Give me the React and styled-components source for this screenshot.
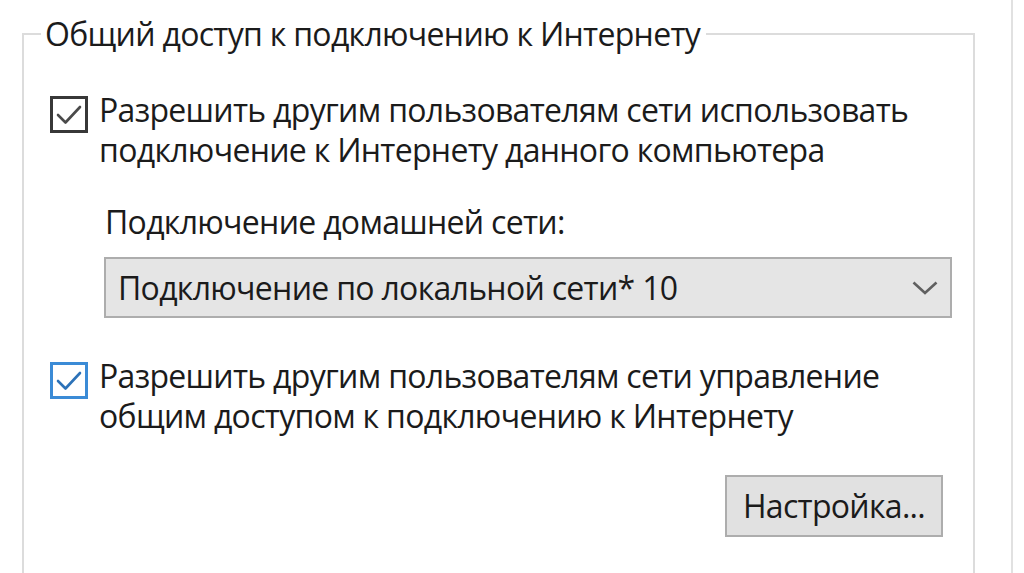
import React from "react";
import styled, { createGlobalStyle } from "styled-components";

const GlobalStyle = createGlobalStyle`
  html, body {
    margin: 0;
    padding: 0;
    background: #ffffff;
  }
  body {
    font-family: "Open Sans", "Noto Sans", sans-serif;
    color: #1b1b1b;
  }
`;

const Page = styled.div`
  width: 1024px;
  height: 573px;
  overflow: hidden;
  padding-left: 22px;
  box-sizing: border-box;
  display: flex;
`;

const Window = styled.div`
  width: 991px;
  height: 100%;
  border-right: 2px solid #e1e1e1;
  box-sizing: border-box;
`;

const Group = styled.fieldset`
  width: 953px;
  margin: 14px 0 0 0;
  padding: 0 0 60px 0;
  border: 2px solid #dcdcdc;
  box-sizing: border-box;
  min-height: 600px;
`;

// shared text metrics, squeezed a little to get Segoe-like widths
const text = `
  font-size: 32px;
  line-height: 40px;
  letter-spacing: -0.7px;
  white-space: nowrap;
`;

const Legend = styled.legend`
  ${text}
  margin-left: 17px;
  padding: 0 6px 0 4px;
`;

const CheckRow = styled.label`
  display: flex;
  align-items: flex-start;
  gap: 11px;
  margin: ${(p) => p.$top}px 0 0 26px;
`;

const Box = styled.span`
  flex: none;
  width: 38px;
  height: 37px;
  margin-top: 6px;
  box-sizing: border-box;
  border: 3px solid ${(p) => (p.$focused ? "#3b8bd6" : "#383838")};
  display: flex;
  align-items: center;
  justify-content: center;
  background: #ffffff;
`;

const CheckText = styled.span`
  ${text}
`;

const Label = styled.div`
  ${text}
  margin: 32px 0 0 81px;
`;

const Combo = styled.div`
  margin: 15px 0 0 80px;
  width: 848px;
  height: 61px;
  box-sizing: border-box;
  border: 2px solid #adadad;
  background: #e5e5e5;
  display: flex;
  align-items: center;
  justify-content: space-between;
  padding: 0 12px 0 12px;
`;

const ComboText = styled.span`
  ${text}
`;

const Actions = styled.div`
  display: flex;
  justify-content: flex-end;
  margin: 39px 30px 0 0;
`;

const Button = styled.button`
  ${text}
  width: 218px;
  height: 62px;
  box-sizing: border-box;
  border: 2px solid #adadad;
  background: #e1e1e1;
  font-family: inherit;
  color: #1b1b1b;
  padding: 0;
`;

const Check = ({ color }) => (
  <svg width="30" height="30" viewBox="0 0 30 30">
    <path
      d="M4 15 L11.5 22.5 L26 7"
      fill="none"
      stroke={color}
      strokeWidth="2.6"
      strokeLinecap="round"
      strokeLinejoin="round"
    />
  </svg>
);

const Chevron = () => (
  <svg width="26" height="14" viewBox="0 0 26 14">
    <path
      d="M1.5 1.5 L13 12 L24.5 1.5"
      fill="none"
      stroke="#606060"
      strokeWidth="2.6"
    />
  </svg>
);

export default function App() {
  return (
    <>
      <GlobalStyle />
      <Page>
        <Window>
          <Group>
            <Legend>Общий доступ к подключению к Интернету</Legend>

            <CheckRow $top={36}>
              <Box>
                <Check color="#4a4a4a" />
              </Box>
              <CheckText>
                Разрешить другим пользователям сети использовать
                <br />
                подключение к Интернету данного компьютера
              </CheckText>
            </CheckRow>

            <Label>Подключение домашней сети:</Label>
            <Combo>
              <ComboText>Подключение по локальной сети* 10</ComboText>
              <Chevron />
            </Combo>

            <CheckRow $top={38}>
              <Box $focused>
                <Check color="#2c72b8" />
              </Box>
              <CheckText>
                Разрешить другим пользователям сети управление
                <br />
                общим доступом к подключению к Интернету
              </CheckText>
            </CheckRow>

            <Actions>
              <Button>Настройка...</Button>
            </Actions>
          </Group>
        </Window>
      </Page>
    </>
  );
}
